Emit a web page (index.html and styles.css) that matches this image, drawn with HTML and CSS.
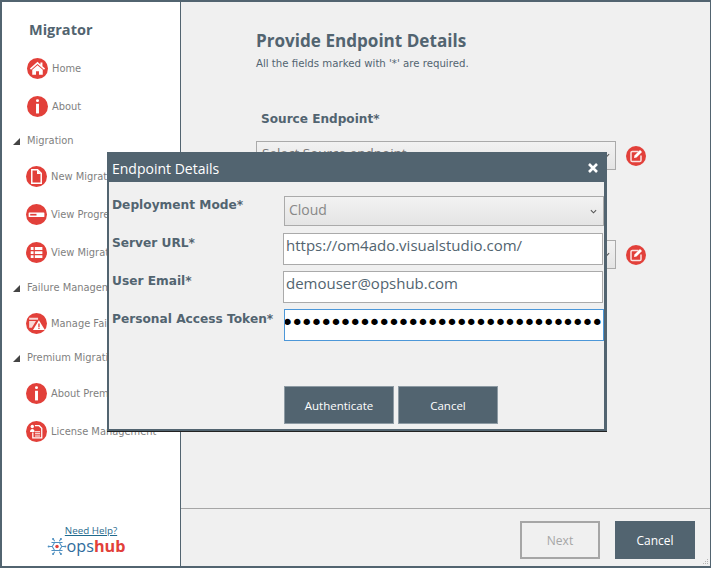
FILE: index.html
```html
<!DOCTYPE html>
<html lang="en">
<head>
<meta charset="utf-8">
<title>Migrator</title>
<link rel="stylesheet" href="styles.css">
</head>
<body>
<div class="window">
  <aside class="sidebar">
    <h1 class="brand">Migrator</h1>
    <nav class="nav">
      <a class="item item-top"><span class="dot"><svg viewBox="0 0 20 20"><path d="M10 3.6 2.8 10l1 1.1L10 5.600l6.200 5.500 1-1.100-2.500-2.200V4.400h-1.900v1.700z" fill="#fff"/><path d="M5 11.200 10 6.900l5 4.300V16h-3.600v-3.400H8.600V16H5z" fill="#fff"/></svg></span>Home</a>
      <a class="item item-top"><span class="dot"><svg viewBox="0 0 20 20"><rect x="8.600" y="3" width="2.800" height="2.800" rx="1.200" fill="#fff"/><rect x="8.600" y="7.400" width="2.800" height="9.200" fill="#fff"/></svg></span>About</a>
      <div class="group group-tight"><span class="tri"></span>Migration</div>
      <a class="item"><span class="dot"><svg viewBox="0 0 20 20"><path d="M5.500 3.500h5.500l3.500 3.500v9.500h-9z" fill="none" stroke="#fff" stroke-width="1.400"/><path d="M10.500 3.500v4h4z" fill="#fff"/></svg></span>New Migration</a>
      <a class="item"><span class="dot"><svg viewBox="0 0 20 20"><rect x="2.500" y="8" width="15" height="4.400" rx=".6" fill="#fff"/><rect x="4" y="9.400" width="6" height="1.600" fill="#e2403a"/></svg></span>View Progress</a>
      <a class="item"><span class="dot"><svg viewBox="0 0 20 20"><path d="M4.500 4.800h2.700v2.700H4.500zM8.400 4.800h7.200v2.700H8.400zM4.500 8.700h2.700v2.700H4.500zM8.400 8.700h7.200v2.700H8.400zM4.500 12.600h2.700v2.700H4.500zM8.400 12.600h7.200v2.700H8.400z" fill="#fff"/></svg></span>View Migration Status</a>
      <div class="group"><span class="tri"></span>Failure Management</div>
      <a class="item"><span class="dot"><svg viewBox="0 0 20 20"><path d="M3 4.500h8.500v2H3zM3 7.500h6.500L5.600 14H3z" fill="#fff" fill-opacity=".8"/><path d="M12.300 6.800 18 16.200H6.600z" fill="#fff"/><rect x="11.700" y="10" width="1.300" height="3.400" fill="#e2403a"/><rect x="11.700" y="14" width="1.300" height="1.200" fill="#e2403a"/></svg></span>Manage Failures</a>
      <div class="group group-tight"><span class="tri"></span>Premium Migration</div>
      <a class="item"><span class="dot"><svg viewBox="0 0 20 20"><rect x="8.600" y="3" width="2.800" height="2.800" rx="1.200" fill="#fff"/><rect x="8.600" y="7.400" width="2.800" height="9.200" fill="#fff"/></svg></span>About Premium</a>
      <a class="item"><span class="dot"><svg viewBox="0 0 20 20"><path d="M8.500 4.500h4l2.500 2.500v9H6.500v-5" fill="none" stroke="#fff" stroke-width="1.200"/><path d="M8.600 10.200h4.800M8.600 12.200h4.800M8.600 14.200h4.800" stroke="#fff"/><circle cx="6" cy="5.200" r="1.600" fill="#fff"/><path d="M3.800 10.500c0-2 1-3 2.200-3s2.200 1 2.200 3z" fill="#fff"/></svg></span>License Management</a>
    </nav>
    <div class="help">
      <a class="help-link">Need Help?</a>
      <div class="logo">
        <svg class="logo-mark" viewBox="0 0 24 24"><g fill="none" stroke="#4f8fc0" stroke-width="1.300"><path d="M9 5.500 7 2M15 5.500 17 2M8.500 7 5 7M15.500 7 19 7M9 18.500 7 22M15 18.500 17 22M8.500 17H5M15.500 17H19M6 12H1M18 12h5M6 12l3-5h6l3 5-3 5H9z"/></g><g fill="#4f8fc0"><circle cx="7" cy="2.500" r="1.300"/><circle cx="17" cy="2.500" r="1.300"/><circle cx="7" cy="21.500" r="1.300"/><circle cx="17" cy="21.500" r="1.300"/><circle cx="1.500" cy="12" r="1.300"/><circle cx="22.500" cy="12" r="1.300"/></g><circle cx="12" cy="12" r="2.200" fill="#e2403a"/></svg>
        <span class="ops">ops</span><span class="hub">hub</span>
      </div>
    </div>
  </aside>
  <main class="main">
    <div class="content">
      <h2 class="title">Provide Endpoint Details</h2>
      <p class="note">All the fields marked with '*' are required.</p>
      <h3 class="section">Source Endpoint*</h3>
      <div class="endpoint">
        <div class="select select-wide"><span class="select-text">Select Source endpoint</span><svg class="chev" viewBox="0 0 8 5"><path d="M1 1l3 3 3-3" fill="none" stroke="#555" stroke-width="1.200"/></svg></div>
        <span class="edit"><svg viewBox="0 0 20 20"><path d="M12.500 5.500H6.300a1.300 1.300 0 0 0-1.300 1.300v7.400a1.300 1.300 0 0 0 1.300 1.300h7.400a1.300 1.300 0 0 0 1.300-1.300V9.500" fill="none" stroke="#fff" stroke-width="1.500" opacity=".85"/><path d="M8.500 9.500 14 4l2 2-5.500 5.500-2.500.5z" fill="#fff"/></svg></span>
      </div>
      <h3 class="section">Target Endpoint*</h3>
      <div class="endpoint">
        <div class="select select-wide"><span class="select-text">Select Target endpoint</span><svg class="chev" viewBox="0 0 8 5"><path d="M1 1l3 3 3-3" fill="none" stroke="#555" stroke-width="1.200"/></svg></div>
        <span class="edit"><svg viewBox="0 0 20 20"><path d="M12.500 5.500H6.300a1.300 1.300 0 0 0-1.300 1.300v7.400a1.300 1.300 0 0 0 1.300 1.300h7.400a1.300 1.300 0 0 0 1.300-1.300V9.500" fill="none" stroke="#fff" stroke-width="1.500" opacity=".85"/><path d="M8.500 9.500 14 4l2 2-5.500 5.500-2.500.5z" fill="#fff"/></svg></span>
      </div>
    </div>
    <footer class="footer">
      <button class="btn btn-disabled" type="button">Next</button>
      <button class="btn btn-cancel" type="button">Cancel</button>
    </footer>
  </main>
  <svg class="grip" viewBox="0 0 6 6"><path d="M4 0h1v1H4zM2 2h1v1H2zM4 2h1v1H4zM0 4h1v1H0zM2 4h1v1H2zM4 4h1v1H4z" fill="#b5b5b5"/></svg>
  <section class="dialog">
    <header class="dialog-head">
      <span class="dialog-title">Endpoint Details</span>
      <svg class="close" viewBox="0 0 12 12"><path d="M2 2l8 8M10 2l-8 8" stroke="#fff" stroke-width="2.600"/></svg>
    </header>
    <div class="form">
      <label class="label">Deployment Mode*</label>
      <div class="select select-mode"><span class="mode-text">Cloud</span><svg class="chev" viewBox="0 0 8 5"><path d="M1 1l3 3 3-3" fill="none" stroke="#555" stroke-width="1.200"/></svg></div>
      <label class="label">Server URL*</label>
      <input class="input" type="text" value="https://om4ado.visualstudio.com/">
      <label class="label">User Email*</label>
      <input class="input" type="text" value="demouser@opshub.com">
      <label class="label">Personal Access Token*</label>
      <input class="input input-token" type="password" value="abcdefghijklmnopqrstuvwxyz0123456">
    </div>
    <div class="dialog-actions">
      <button class="btn btn-dlg btn-auth" type="button">Authenticate</button>
      <button class="btn btn-dlg btn-dlg-cancel" type="button">Cancel</button>
    </div>
  </section>
</div>
</body>
</html>
```
FILE: styles.css
```css
* { box-sizing: border-box; }
html, body { margin: 0; height: 100%; }
body { background: #f0f0f0; overflow: hidden; }
.window {
  position: relative;
  width: 711px;
  height: 568px;
  display: flex;
  border: 2px solid #526470;
  border-right-width: 1px;
  font-family: "DejaVu Sans", sans-serif;
}
.sidebar {
  width: 179px;
  flex: none;
  background: #fff;
  border-right: 1px solid #526470;
  display: flex;
  flex-direction: column;
  overflow: hidden;
}
.brand {
  margin: 19px 0 0 27px;
  font: 700 14.5px/18px "Open Sans", sans-serif;
  color: #526470;
}
.nav { display: flex; flex-direction: column; gap: 18px; margin-top: 19px; }
.item {
  display: flex;
  align-items: center;
  height: 20px;
  padding-left: 24px;
  font-size: 9.9px;
  color: #7f7f7f;
  white-space: nowrap;
  gap: 4px;
}
.item-top { margin-left: 1px; }
.dot {
  width: 21px;
  height: 21px;
  flex: none;
  border-radius: 50%;
  background: #e2403a;
  display: flex;
}
.dot svg { width: 100%; height: 100%; }
.group {
  display: flex;
  align-items: center;
  height: 14px;
  margin: 0 0 1px 11px;
  font-size: 9.9px;
  color: #7f7f7f;
  white-space: nowrap;
  gap: 7px;
}
.group-tight { margin-top: -1px; }
.tri {
  width: 0;
  height: 0;
  margin-top: 3px;
  border-left: 7px solid transparent;
  border-bottom: 7px solid #444;
}
.help {
  margin-top: auto;
  margin-bottom: 11px;
  display: flex;
  flex-direction: column;
  align-items: center;
}
.help-link {
  font: 9.8px/13px "Open Sans", sans-serif;
  color: #1f6a8e;
  text-decoration: underline;
}
.logo { display: flex; align-items: center; height: 18px; margin-right: 10px; }
.logo-mark { width: 20px; height: 19px; flex: none; }
.ops { font: 400 16.2px/18px "Open Sans", sans-serif; color: #2f6b9c; }
.hub { font: 700 16.2px/18px "Open Sans", sans-serif; color: #e2403a; }
.main { flex: 1; display: flex; flex-direction: column; min-width: 0; background: #f0f0f0; }
.content { flex: 1; padding: 0 0 0 75px; }
.title {
  margin: 27px 0 0;
  font: 700 17.1px/24px "Open Sans", sans-serif;
  color: #526470;
}
.note { margin: 4px 0 0; font-size: 10.2px; line-height: 14px; color: #526470; }
.section { margin: 40px 0 0 5px; font-size: 12.1px; line-height: 16px; font-weight: 700; color: #526470; }
.endpoint { display: flex; align-items: center; gap: 10px; margin-top: 14px; }
.select {
  display: flex;
  align-items: center;
  justify-content: space-between;
  border: 1px solid #aaa;
  background: linear-gradient(#f2f2f2, #e4e4e4);
}
.select-wide { width: 360px; height: 29px; padding: 0 5px; font: 13.5px "Open Sans", sans-serif; color: #777; }
.select-text { margin-bottom: 6px; }
.chev { width: 7px; height: 5px; flex: none; }
.edit { width: 20px; height: 20px; border-radius: 50%; background: #e2403a; display: flex; }
.edit svg { width: 100%; height: 100%; }
.footer {
  height: 58px;
  flex: none;
  border-top: 1px solid #a6a6a6;
  display: flex;
  justify-content: flex-end;
  align-items: flex-start;
  gap: 15px;
  padding: 12px 15px 0 0;
}
.btn { font: 12px "Open Sans", sans-serif; padding: 0; cursor: default; }
.btn-disabled { width: 80px; height: 38px; background: #f0f0f0; border: 2px solid #a6a6a6; color: #a6a6a6; }
.btn-cancel { width: 80px; height: 38px; background: #526470; border: 0; color: #fff; }
.grip { position: absolute; right: 1px; bottom: 1px; width: 6px; height: 6px; }
.dialog {
  position: absolute;
  left: 105px;
  top: 150px;
  width: 500px;
  height: 279px;
  background: #f0f0f0;
  border: 2px solid #526470;
  border-top: 0;
  border-right-width: 3px;
  box-shadow: 0 1px 0 #222;
}
.dialog-head {
  height: 30px;
  background: #526470;
  margin-left: -2px;
  margin-right: -3px;
  display: flex;
  align-items: center;
  justify-content: space-between;
  padding: 2px 8px 0 5px;
}
.dialog-title { font: 14px "Open Sans", sans-serif; color: #fff; }
.close { width: 12px; height: 12px; }
.form {
  display: grid;
  grid-template-columns: 172px 320px;
  grid-auto-rows: 32px;
  row-gap: 6px;
  margin: 14px 0 0 3px;
}
.label { font-size: 12.2px; line-height: 16px; font-weight: 700; color: #526470; padding-top: 1px; white-space: nowrap; }
.select-mode { width: 320px; height: 30px; padding: 0 6px 0 4px; font: 14px "Open Sans", sans-serif; color: #888; }
.mode-text { display: block; margin-bottom: 3px; }
.input {
  width: 320px;
  height: 32px;
  margin: -1px 0 0 -1px;
  padding: 0 2px 9px;
  border: 1px solid #aaa;
  background: #fff;
  outline: 0;
  font: 15px "Open Sans", sans-serif;
  color: #526470;
}
.input-token {
  margin-left: 0;
  padding: 0 0 5px;
  border-color: #4c97d8;
  font: 22px "DejaVu Sans", sans-serif;
  letter-spacing: -3.3px;
  text-indent: -4px;
  color: #000;
}
.dialog-actions { display: flex; gap: 4px; margin: 44px 0 0 175px; }
.btn-dlg { font-size: 11.5px; height: 38px; background: #526470; border: 1px solid #8d9aa3; color: #fff; }
.btn-auth { width: 110px; }
.btn-dlg-cancel { width: 100px; }
```
